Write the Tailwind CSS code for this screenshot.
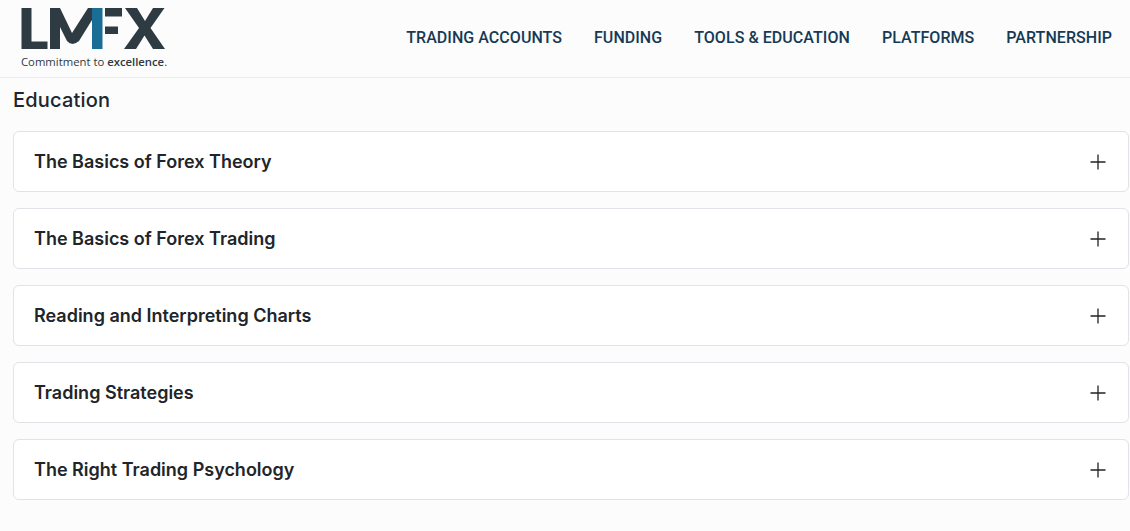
<!DOCTYPE html>
<html lang="en">
<head>
    <meta charset="UTF-8">
    <title>Education</title>
    <script src="https://cdn.jsdelivr.net/npm/@tailwindcss/browser@4"></script>
</head>
<body class="bg-[#fcfcfd] font-['Inter',sans-serif]">

    <!-- Header -->
    <header class="h-[78px] flex items-center justify-between border-b border-[#ececee] pl-[21px] pr-[18px]">
        <div class="w-[150px] h-[78px] flex flex-col">
            <svg width="146" height="43" viewBox="21 8 146 43" class="mt-[8px]">
                <path d="M21.500 8h10v33.500h16V49h-26z" fill="#2f3b42"/>
                <path d="M50 49V8h10l12 25 16-25h4v12L79 41q-7 6-12 0l-7-14v22z" fill="#2f3b42"/>
                <rect x="92" y="8" width="10.500" height="41" fill="#1a6e95"/>
                <path d="M105 8h17v8.500h-17zM105 26.500h13v7.500h-13z" fill="#2f3b42"/>
                <path d="M125 8h12l8 13 8-13h11.500l-14 20L165 49h-12l-8.500-13.500L136 49h-12l15-21z" fill="#2f3b42"/>
            </svg>
            <p class="font-['Open_Sans',sans-serif] text-[11.300px] leading-[14px] text-[#30393f] mt-[4px] whitespace-nowrap">Commitment to <span class="font-semibold">excellence</span>.</p>
        </div>
        <nav class="flex items-center gap-[32px] font-['Roboto',sans-serif] font-medium text-[16px] tracking-[0.05px] text-[#163a54] -mt-[1px]">
            <a href="#">TRADING ACCOUNTS</a>
            <a href="#">FUNDING</a>
            <a href="#">TOOLS &amp; EDUCATION</a>
            <a href="#">PLATFORMS</a>
            <a href="#">PARTNERSHIP</a>
        </nav>
    </header>

    <main class="pl-[13px] pr-px">
        <h1 class="text-[20px] leading-[28px] font-medium tracking-[0.2px] text-[#212529] mt-[8px] mb-[17px]">Education</h1>

        <div class="flex flex-col gap-[16px]">
            <div class="h-[61px] bg-white border border-[#e2e2e8] rounded-[6px] flex items-center justify-between pl-[20px] pr-[22px]">
                <h2 class="text-[18px] font-semibold text-[#212529]">The Basics of Forex Theory</h2>
                <svg width="16" height="16" viewBox="0 0 16 16" stroke="#222" stroke-width="1.300" fill="none"><path d="M8 0.500v15M0.500 8h15"/></svg>
            </div>
            <div class="h-[61px] bg-white border border-[#e2e2e8] rounded-[6px] flex items-center justify-between pl-[20px] pr-[22px]">
                <h2 class="text-[18px] font-semibold text-[#212529]">The Basics of Forex Trading</h2>
                <svg width="16" height="16" viewBox="0 0 16 16" stroke="#222" stroke-width="1.300" fill="none"><path d="M8 0.500v15M0.500 8h15"/></svg>
            </div>
            <div class="h-[61px] bg-white border border-[#e2e2e8] rounded-[6px] flex items-center justify-between pl-[20px] pr-[22px]">
                <h2 class="text-[18px] font-semibold text-[#212529]">Reading and Interpreting Charts</h2>
                <svg width="16" height="16" viewBox="0 0 16 16" stroke="#222" stroke-width="1.300" fill="none"><path d="M8 0.500v15M0.500 8h15"/></svg>
            </div>
            <div class="h-[61px] bg-white border border-[#e2e2e8] rounded-[6px] flex items-center justify-between pl-[20px] pr-[22px]">
                <h2 class="text-[18px] font-semibold text-[#212529]">Trading Strategies</h2>
                <svg width="16" height="16" viewBox="0 0 16 16" stroke="#222" stroke-width="1.300" fill="none"><path d="M8 0.500v15M0.500 8h15"/></svg>
            </div>
            <div class="h-[61px] bg-white border border-[#e2e2e8] rounded-[6px] flex items-center justify-between pl-[20px] pr-[22px]">
                <h2 class="text-[18px] font-semibold text-[#212529]">The Right Trading Psychology</h2>
                <svg width="16" height="16" viewBox="0 0 16 16" stroke="#222" stroke-width="1.300" fill="none"><path d="M8 0.500v15M0.500 8h15"/></svg>
            </div>
        </div>
    </main>

</body>
</html>
